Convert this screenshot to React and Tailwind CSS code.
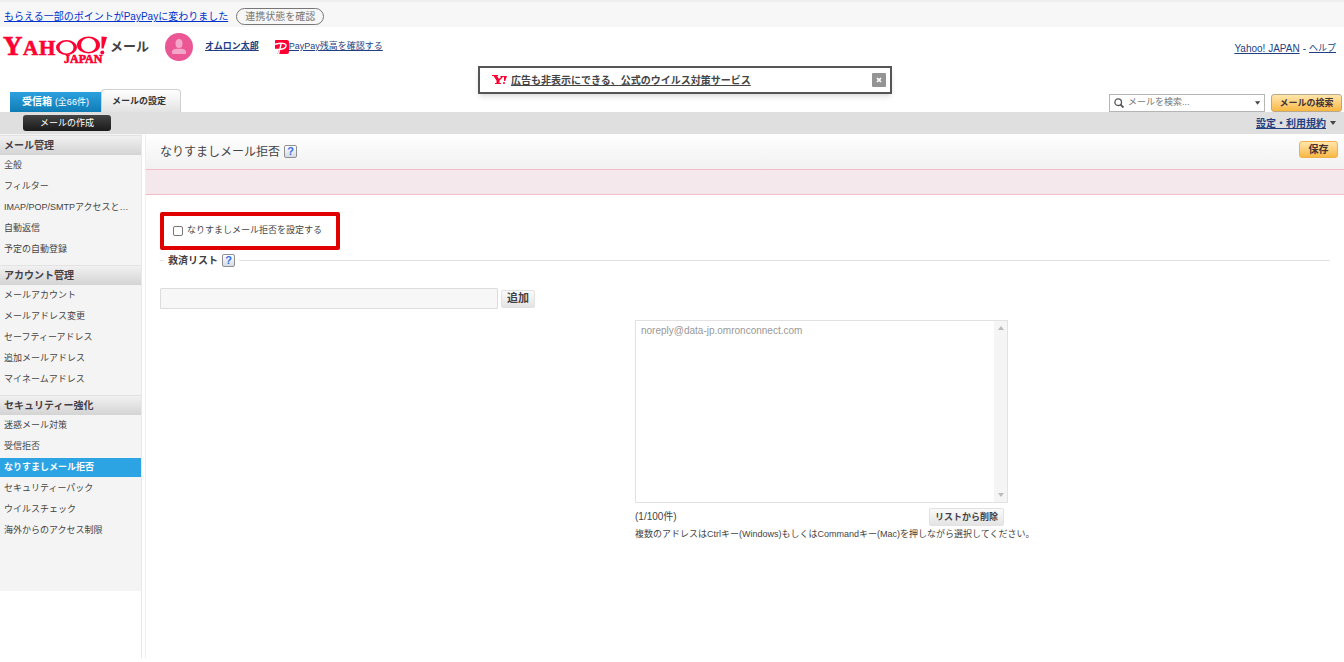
import React from "react";

const groups = [
  {
    title: "メール管理",
    items: ["全般", "フィルター", "IMAP/POP/SMTPアクセスと…", "自動返信", "予定の自動登録"],
  },
  {
    title: "アカウント管理",
    items: ["メールアカウント", "メールアドレス変更", "セーフティーアドレス", "追加メールアドレス", "マイネームアドレス"],
  },
  {
    title: "セキュリティー強化",
    items: ["迷惑メール対策", "受信拒否", "なりすましメール拒否", "セキュリティーパック", "ウイルスチェック", "海外からのアクセス制限"],
  },
];

function YahooLogo() {
  return (
    <svg
      viewBox="0 0 106 38"
      className="h-[38px] w-[106px] shrink-0"
      fill="#ff0033"
      stroke="#ff0033"
      strokeWidth="0.6"
      fontFamily="Liberation Serif, serif"
      role="img"
      aria-label="Yahoo! JAPAN"
    >
      <text x="1" y="27" fontSize="27">Y</text>
      <text x="21" y="27" fontSize="21">A</text>
      <text x="37" y="27" fontSize="21">H</text>
      <path fillRule="evenodd" stroke="none" d="M54 19.500a10.500 7.500 0 1 0 21 0a10.500 7.500 0 1 0-21 0zM57.500 19.500a7 6 0 1 0 14 0a7 6 0 1 0-14 0z" />
      <path fillRule="evenodd" stroke="none" d="M75 17a11.500 8.500 0 1 0 23 0a11.500 8.500 0 1 0-23 0zM79 17a7.500 7 0 1 0 15 0a7.500 7 0 1 0-15 0z" />
      <path d="M99.500 8.500 105 9 101.500 20.500H99.500z" stroke="none" />
      <circle cx="100.300" cy="24.500" r="2" stroke="none" />
      <text x="62" y="35" fontSize="12">JAPAN</text>
    </svg>
  );
}

function Avatar() {
  return (
    <svg viewBox="0 0 28 28" className="size-7 shrink-0" aria-hidden="true">
      <circle cx="14" cy="14" r="14" fill="#eb5695" />
      <g fill="#f3a6c7">
        <ellipse cx="14" cy="10.500" rx="3.500" ry="4.500" />
        <path d="M7 21v-1.500c0-2 1-3 3-3.400 2-.5 6-.5 8 0 2 .4 3 1.400 3 3.400V21z" />
      </g>
    </svg>
  );
}

function PayPayIcon() {
  return (
    <svg viewBox="0 0 14 14" className="size-3.5" aria-hidden="true">
      <path d="M1 0h11a2 2 0 0 1 2 2v10a2 2 0 0 1-2 2H2.500L4 9H0V1a1 1 0 0 1 1-1z" fill="#ff0033" />
      <path d="M6.300 3.500 3.500 14M0 4.300C6 2.600 11.200 3 11 5.900 10.800 8.400 7 9.800 0 9.500" fill="none" stroke="#fff" strokeWidth="1.400" />
    </svg>
  );
}

function Caret() {
  return (
    <svg viewBox="0 0 6 4" className="h-1 w-1.5" aria-hidden="true">
      <path d="M0 0h6L3 4z" fill="#444" />
    </svg>
  );
}

function HelpButton() {
  return (
    <button
      type="button"
      aria-label="ヘルプを表示"
      className="flex size-[13px] items-center justify-center rounded-[2px] border border-[#8f9092] bg-linear-to-b from-white to-[#d5dbe6] font-['Liberation_Sans',sans-serif] text-[11px] leading-none font-bold text-[#3470e0]"
    >
      ?
    </button>
  );
}

function TopBar() {
  return (
    <div className="flex h-[27px] items-center gap-2 border-t-2 border-[#eeeeee] bg-[#f7f7f7] px-1 pt-1">
      <a href="#points" className="text-[10px] text-[#0033cc] underline">
        もらえる一部のポイントがPayPayに変わりました
      </a>
      <button type="button" className="h-[17px] rounded-full border border-[#777777] px-2 text-[10px] leading-none text-[#777777]">
        連携状態を確認
      </button>
    </div>
  );
}

function Header() {
  return (
    <header>
      <div className="flex h-[39px] items-center pr-2 pl-0.5">
        <a href="#home" className="flex items-center gap-0.5 text-[13px] font-bold text-[#444444]">
          <YahooLogo />
          <span>メール</span>
        </a>
        <div className="ml-4 flex items-center gap-3">
          <Avatar />
          <a href="#account" className="text-[9px] font-bold text-[#233f83] underline">オムロン太郎</a>
        </div>
        <a href="#paypay" className="ml-4 flex items-center text-[9px] text-[#233f83] underline">
          <PayPayIcon />
          PayPay残高を確認する
        </a>
        <nav className="ml-auto flex items-center gap-[3px] pt-1 text-[10px] text-[#233f83]">
          <a href="#yahoo" className="underline">Yahoo! JAPAN</a>
          <span>-</span>
          <a href="#help" className="text-[9px] underline">ヘルプ</a>
        </nav>
      </div>

      <div className="grid h-[46px] grid-cols-[478px_414px_1fr]">
        <div className="flex items-end pl-2.5" role="tablist" aria-label="メール">
          <button type="button" role="tab" aria-selected="false" className="h-5 w-[91px] bg-linear-to-b from-[#2ca1df] to-[#0f7cb5] text-[10px] leading-none whitespace-nowrap text-white">
            <b>受信箱</b> <span className="text-[9px]">(全66件)</span>
          </button>
          <button type="button" role="tab" aria-selected="true" className="h-[23px] w-20 rounded-t border border-b-0 border-[#d0d0d0] bg-linear-to-b from-white to-[#e3e3e3] pr-1 text-[9px] leading-none font-bold text-[#333333]">
            メールの設定
          </button>
        </div>

        <aside className="flex h-7 items-center gap-1 border-2 border-[#555555] bg-white pr-1 pl-3 shadow-md" aria-label="お知らせ">
          <svg viewBox="0 0 15 10" className="h-2.5 w-[15px]" fill="#ff0033" aria-hidden="true">
            <path d="M0 0h6v1H5l2 3 2-2-1-1h4v1h-1L7.500 5.500V8H9v1H3V8h1.500V5.500L1.500 1H0z" />
            <path d="M12 1h3l-1.800 5H12z" />
            <circle cx="12" cy="8" r="1" />
          </svg>
          <a href="#security" className="text-[10px] font-bold text-[#444444] underline">
            広告も非表示にできる、公式のウイルス対策サービス
          </a>
          <button type="button" aria-label="閉じる" className="ml-auto flex size-3.5 items-center justify-center rounded-[1px] bg-[#949494]">
            <svg viewBox="0 0 6 6" className="size-1.5" aria-hidden="true">
              <path d="M1 1l4 4M5 1L1 5" stroke="#fff" strokeWidth="1.700" />
            </svg>
          </button>
        </aside>

        <form className="flex items-end justify-end gap-1.5 pr-0.5" onSubmit={(e) => e.preventDefault()}>
          <label className="flex h-[18px] w-[156px] items-center gap-1 border border-[#b5b5b5] bg-white px-1">
            <svg viewBox="0 0 10 10" className="size-2.5 shrink-0" fill="none" stroke="#555" aria-hidden="true">
              <circle cx="4.200" cy="4.200" r="3.300" strokeWidth="1.300" />
              <path d="M6.600 6.600 9.500 9.500" strokeWidth="1.900" />
            </svg>
            <input type="search" aria-label="メールを検索" placeholder="メールを検索..." className="w-full min-w-0 bg-transparent text-[9px] outline-none placeholder:text-[#777777]" />
            <Caret />
          </label>
          <button type="submit" className="h-[18px] w-[71px] rounded-[3px] border border-[#b9a98c] bg-linear-to-b from-[#ffe6ab] to-[#f8b840] text-[9px] leading-none font-bold text-[#443333]">
            メールの検索
          </button>
        </form>
      </div>

      <div className="flex h-[22px] items-center justify-between bg-[#dfdfdf] pr-2 pl-[23px]">
        <button type="button" className="h-4 w-[88px] rounded-[3px] bg-linear-to-b from-[#444444] to-[#1b1b1b] text-[9px] leading-none text-white">
          メールの作成
        </button>
        <a href="#terms" className="flex items-center gap-1 text-[10px] font-bold text-[#233f83]">
          <span className="underline">設定・利用規約</span>
          <Caret />
        </a>
      </div>
    </header>
  );
}

function Sidebar() {
  return (
    <div className="w-[146px] shrink-0 border-r border-[#eeeeee]">
      <div className="mr-[3px] h-full border-r border-[#e8e8e8]">
        <nav className="bg-[#f4f4f4] pt-px pb-[50px]" aria-label="設定">
          {groups.map((group) => (
            <section key={group.title} className="pb-[5px] last:pb-0">
              <h2 className="flex h-5 items-center border-t border-[#e2e2e2] bg-linear-to-b from-[#f1f1f1] to-[#d4d4d4] px-1 text-[10px] font-bold text-[#443f44]">
                {group.title}
              </h2>
              <ul>
                {group.items.map((item) => {
                  const active = item === "なりすましメール拒否";
                  return (
                    <li key={item} className="flex h-[21px] items-center">
                      <a
                        href="#settings"
                        aria-current={active ? "page" : undefined}
                        className={
                          active
                            ? "flex h-[19px] w-full items-center bg-[#2ca3e3] px-1 text-[9px] font-bold whitespace-nowrap text-white"
                            : "flex h-[19px] w-full items-center px-1 text-[9px] whitespace-nowrap text-[#444444]"
                        }
                      >
                        {item}
                      </a>
                    </li>
                  );
                })}
              </ul>
            </section>
          ))}
        </nav>
      </div>
    </div>
  );
}

const lightButton =
  "h-[18px] rounded-[2px] border border-[#e2e2e2] bg-linear-to-b from-[#fafafa] to-[#e4e4e4] px-[5px] leading-none font-bold whitespace-nowrap text-[#443f44]";

function Main() {
  return (
    <main className="min-w-0 flex-1">
      <div className="flex h-9 items-center justify-between border-b border-[#f3bac7] bg-linear-to-b from-white to-[#f1f1f1] pr-1.5 pb-1 pl-3.5">
        <div className="flex items-center gap-1 pt-1">
          <h1 className="text-[12px] text-[#444444]">なりすましメール拒否</h1>
          <HelpButton />
        </div>
        <button type="button" className="h-[17px] w-[39px] rounded-[3px] border border-[#efb14a] bg-linear-to-b from-[#ffe6ab] to-[#f8b840] text-[10px] leading-none font-bold text-[#443333]">
          保存
        </button>
      </div>
      <div className="h-[25px] border-b border-[#f3bac7] bg-[#f5e8ec]" />

      <div className="pt-[17px] pr-3.5 pl-3.5">
        <label className="flex h-[38px] w-[180px] items-center gap-1 rounded-[2px] border-4 border-[#e00000] pl-[9px] text-[9px] text-[#444444]">
          <input type="checkbox" className="size-2.5 appearance-none rounded-[2px] border border-[#777777] bg-white checked:bg-[#2ca3e3]" />
          なりすましメール拒否を設定する
        </label>

        <section>
          <div className="mt-0.5 flex h-4 items-center gap-1">
            <span className="h-px w-1 bg-[#e2e2e2]" />
            <h2 className="text-[10px] font-bold text-[#443f44]">救済リスト</h2>
            <HelpButton />
            <span className="h-px flex-1 bg-[#e2e2e2]" />
          </div>

          <form className="mt-5 flex items-center gap-[3px]" onSubmit={(e) => e.preventDefault()}>
            <input type="text" aria-label="救済リストに追加するアドレス" className="h-[21px] w-[338px] rounded-[1px] border border-[#dcdcdc] bg-[#f7f7f7] px-1 text-[10px] outline-none" />
            <button type="submit" className={lightButton + " text-[11px]"}>追加</button>
          </form>

          <div className="mt-[11px] ml-[475px] w-[373px]">
            <div className="flex h-[183px] border border-[#e2e2e2]">
              <select multiple disabled aria-label="救済リスト" className="min-w-0 flex-1 overflow-hidden bg-white px-1 py-1 text-[10px] opacity-100">
                <option className="min-h-0 px-px py-0 text-[#999999]">noreply@data-jp.omronconnect.com</option>
              </select>
              <div className="flex w-[13px] flex-col items-center justify-between bg-[#f5f5f5] py-[5px]">
                <svg viewBox="0 0 6 4" className="h-1 w-1.5" aria-hidden="true">
                  <path d="M0 4h6L3 0z" fill="#bbb" />
                </svg>
                <svg viewBox="0 0 6 4" className="h-1 w-1.5" aria-hidden="true">
                  <path d="M0 0h6L3 4z" fill="#bbb" />
                </svg>
              </div>
            </div>
            <div className="mt-[5px] flex items-center justify-between pr-1 text-[#444444]">
              <p className="text-[10px] leading-4">(1/100件)</p>
              <button type="button" className={lightButton + " text-[9px]"}>リストから削除</button>
            </div>
            <p className="text-[9px] leading-4 whitespace-nowrap text-[#444444]">
              複数のアドレスはCtrlキー(Windows)もしくはCommandキー(Mac)を押しながら選択してください。
            </p>
          </div>
        </section>
      </div>
    </main>
  );
}

export default function App() {
  return (
    <div className="min-h-screen bg-white pb-1 font-['Liberation_Sans','Noto_Sans_CJK_JP',sans-serif] text-[#444444]" lang="ja">
      <TopBar />
      <Header />
      <div className="flex min-h-[524px]">
        <Sidebar />
        <Main />
      </div>
    </div>
  );
}
